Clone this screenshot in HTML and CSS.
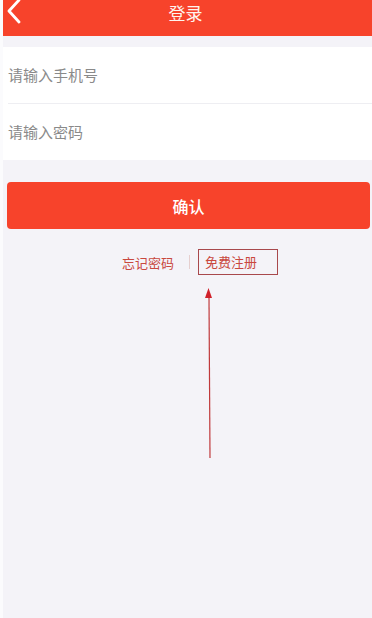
FILE: index.html
```html
<!DOCTYPE html>
<html lang="zh-CN">
<head>
  <meta charset="UTF-8">
  <title>登录</title>
  <link rel="stylesheet" href="styles.css">
</head>
<body>
  <div class="page">
    <!-- Top bar -->
    <div class="topbar">
      <svg class="back" width="18" height="26" viewBox="0 0 18 26">
        <path d="M15 1 L5 12 L15 23" fill="none" stroke="#fff" stroke-width="2.8" stroke-linecap="round" stroke-linejoin="round"/>
      </svg>
      <div class="title">登录</div>
    </div>

    <!-- Form -->
    <div class="form">
      <div class="field">请输入手机号</div>
      <div class="field">请输入密码</div>
    </div>

    <button class="submit">确认</button>

    <div class="links">
      <span class="link">忘记密码</span>
      <span class="sep"></span>
      <span class="link boxed">免费注册</span>
    </div>

    <!-- annotation arrow -->
    <svg class="arrow" width="20" height="180" viewBox="0 0 20 180">
      <path d="M10 12 L11 172" stroke="#c0393b" stroke-width="1.2" fill="none"/>
      <path d="M6 12 L9.5 2 L13 12 Z" fill="#d0202a"/>
    </svg>
  </div>
</body>
</html>
```

FILE: styles.css
```css
html, body {
  margin: 0;
  padding: 0;
  height: 100%;
  background: #f4f3f8;
  font-family: "Noto Sans CJK SC", "Liberation Sans", sans-serif;
}

.page {
  position: relative;
  min-height: 100%;
  border-left: 3px solid #fbfbfd;
}

.topbar {
  height: 36px;
  background: #f7432b;
  position: relative;
  display: flex;
  justify-content: center;
}

.back {
  position: absolute;
  left: 1px;
  top: -1px;
}

.title {
  color: #fff4ee;
  font-size: 17px;
  line-height: 26px;
  margin-left: -4px;
}

.form {
  margin-top: 11px;
  background: #fff;
}

.field {
  height: 56px;
  line-height: 56px;
  padding-left: 5px;
  font-size: 15px;
  color: #8a8a8a;
}

.field + .field {
  border-top: 1px solid #eeeef2;
  margin-left: 5px;
  padding-left: 0;
}

.submit {
  display: block;
  width: 363px;
  height: 47px;
  margin: 22px 0 0 4px;
  border: 0;
  border-radius: 4px;
  background: #f7432b;
  color: #fff;
  font-family: inherit;
  font-size: 16px;
  font-weight: 500;
}

.links {
  display: flex;
  align-items: center;
  margin-top: 20px;
  padding-left: 119px;
  height: 26px;
}

.link {
  font-size: 13px;
  color: #c9483e;
}

.sep {
  width: 1px;
  height: 14px;
  background: #e6cfcf;
  margin: 0 8px 0 15px;
}

.boxed {
  box-sizing: border-box;
  height: 26px;
  line-height: 24px;
  width: 80px;
  padding-left: 6px;
  border: 1px solid #a8484c;
}

.arrow {
  position: absolute;
  left: 196px;
  top: 286px;
}
```
